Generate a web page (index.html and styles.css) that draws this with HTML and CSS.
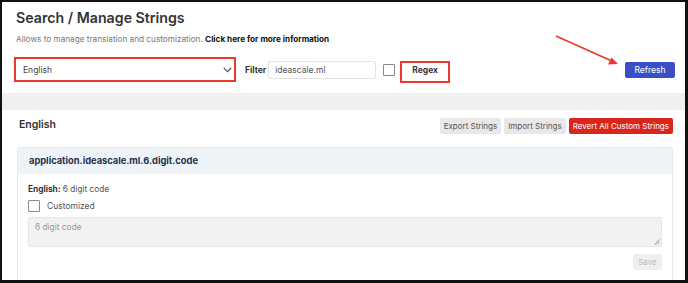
FILE: index.html
```html
<!DOCTYPE html>
<html lang="en">
<head>
  <meta charset="UTF-8" />
  <title>Search / Manage Strings</title>
  <link rel="stylesheet" href="styles.css">
</head>
<body>
  <div class="frame">
    <div class="top">
      <h1 class="title">Search / Manage Strings</h1>
      <p class="subtitle">Allows to manage translation and customization. <a href="#">Click here for more information</a></p>

      <div class="controls">
        <div class="mark select-mark">
          <div class="select">
            <span>English</span>
            <svg class="chevron" width="9" height="6" viewBox="0 0 9 6"><path d="M0.8 1l3.7 3.7 3.7-3.7" fill="none" stroke="#555" stroke-width="1.1"/></svg>
          </div>
        </div>
        <label class="filter-label">Filter</label>
        <div class="text-input">ideascale.ml</div>
        <span class="checkbox"></span>
        <div class="mark regex-mark">Regex</div>
        <button class="btn btn-primary">Refresh</button>
      </div>
    </div>

    <!-- annotation arrow -->
    <svg class="arrow" width="80" height="40" viewBox="0 0 80 40">
      <line x1="2" y1="2" x2="60" y2="28" stroke="#e8392b" stroke-width="1.6"/>
      <path d="M64 30l-10 0.5 3.5-7z" fill="#e8392b"/>
    </svg>

    <div class="band"></div>

    <div class="section">
      <div class="section-head">
        <h2>English</h2>
        <div class="actions">
          <button class="btn btn-light">Export Strings</button>
          <button class="btn btn-light">Import Strings</button>
          <button class="btn btn-danger">Revert All Custom Strings</button>
        </div>
      </div>

      <div class="card">
        <div class="card-head">application.ideascale.ml.6.digit.code</div>
        <div class="card-body">
          <p class="source"><b>English:</b> 6 digit code</p>
          <div class="check-row"><span class="checkbox"></span>Customized</div>
          <div class="textarea">6 digit code
            <svg class="grip" width="6" height="6" viewBox="0 0 6 6"><path d="M5.5 0.5L0.5 5.5M5.5 3L3 5.5" stroke="#777" stroke-width="0.8"/></svg>
          </div>
          <div class="save-row"><button class="btn btn-disabled">Save</button></div>
        </div>
      </div>
    </div>
  </div>
</body>
</html>
```

FILE: styles.css
```css
body {
  margin: 0;
  font-family: Inter, "Noto Sans", sans-serif;
  color: #333;
}
.frame {
  position: relative;
  height: 283px;
  box-sizing: border-box;
  border: 2px solid #111;
  border-right-width: 3px;
  border-bottom-width: 3px;
  overflow: hidden;
  background: #fff;
}
.top {
  padding: 6px 10px 0 14px;
  height: 85px;
}
.title {
  font-size: 14.2px;
  font-weight: 600;
  margin: 0;
  line-height: 20px;
}
.subtitle {
  font-size: 8.2px;
  color: #777;
  margin: 6px 0 0;
}
.subtitle a {
  color: #111;
  font-weight: 700;
  text-decoration: none;
}
.controls {
  display: flex;
  align-items: center;
  margin-top: 12px;
}
.mark {
  border: 2px solid #e8392b;
  box-sizing: border-box;
}
.select-mark {
  width: 222px;
  height: 25px;
  margin-left: -2px;
  padding: 1px;
}
.select {
  display: flex;
  align-items: center;
  justify-content: space-between;
  height: 100%;
  padding: 0 1px 0 6px;
  font-size: 8.5px;
  color: #444;
}
.filter-label {
  font-size: 8.5px;
  font-weight: 700;
  margin-left: 9px;
  color: #333;
}
.text-input {
  width: 108px;
  height: 18px;
  box-sizing: border-box;
  border: 1px solid #e3e3e3;
  border-radius: 2px;
  margin-left: 2px;
  padding: 0 6px;
  font-size: 8.5px;
  line-height: 16px;
  color: #555;
}
.checkbox {
  display: inline-block;
  width: 10px;
  height: 10px;
  border: 1px solid #888;
  border-radius: 1px;
  background: #fff;
}
.controls .checkbox {
  margin-left: 7px;
}
.regex-mark {
  width: 50px;
  height: 22px;
  margin-left: 5px;
  margin-top: 5px;
  padding: 2px 0 0 10px;
  font-size: 8.5px;
  font-weight: 700;
  color: #333;
}
.btn {
  font-family: Inter, "Noto Sans", sans-serif;
  border: none;
  border-radius: 2px;
  font-size: 8px;
  padding: 0 4px;
  height: 16px;
  cursor: pointer;
}
.btn-primary {
  margin-left: auto;
  margin-right: 0;
  width: 50px;
  background: #3a4ec7;
  color: #fff;
  font-size: 8.5px;
}
.arrow {
  position: absolute;
  left: 552px;
  top: 32px;
}
.band {
  height: 17px;
  background: #efefef;
}
.section {
  padding: 0 12px 0 15px;
}
.section-head {
  display: flex;
  align-items: flex-start;
  justify-content: space-between;
  height: 37px;
  padding-top: 7px;
  box-sizing: border-box;
}
.section-head h2 {
  font-size: 10.5px;
  font-weight: 600;
  line-height: 16px;
  margin: 0 0 0 2px;
}
.actions {
  display: flex;
  gap: 3px;
  margin-top: 1px;
}
.btn-light {
  background: #e8e8e8;
  color: #555;
}
.btn-danger {
  background: #d9261c;
  color: #fff;
}
.card {
  border: 1px solid #eaeaea;
  border-radius: 2px;
  height: 140px;
}
.card-head {
  background: #eef3f8;
  height: 26px;
  line-height: 26px;
  padding-left: 11px;
  font-size: 9.3px;
  font-weight: 700;
  color: #1e3050;
}
.card-body {
  padding: 10px 10px 0 10px;
}
.source {
  margin: 0;
  font-size: 8.3px;
  color: #555;
}
.source b {
  color: #333;
}
.check-row {
  display: flex;
  align-items: center;
  gap: 7px;
  margin-top: 6px;
  font-size: 8.5px;
  color: #555;
}
.textarea {
  position: relative;
  margin-top: 5px;
  height: 30px;
  box-sizing: border-box;
  background: #f2f2f2;
  border: 1px solid #e6e6e6;
  border-radius: 2px;
  padding: 4px 6px;
  font-size: 8.3px;
  color: #999;
}
.grip {
  position: absolute;
  right: 1px;
  bottom: 1px;
}
.save-row {
  display: flex;
  justify-content: flex-end;
  margin-top: 7px;
}
.btn-disabled {
  background: #efefef;
  color: #bbb;
  width: 29px;
  padding: 0;
}
```
